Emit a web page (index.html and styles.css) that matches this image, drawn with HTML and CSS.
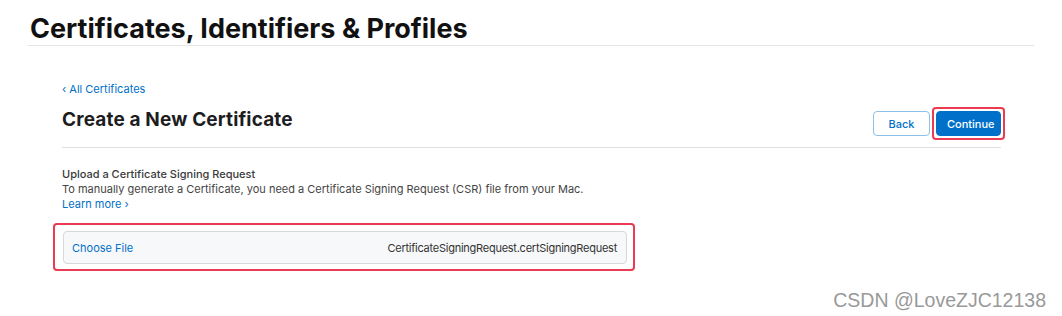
FILE: index.html
```html
<!DOCTYPE html>
<html lang="en">
<head>
  <meta charset="UTF-8" />
  <title>Create a New Certificate</title>
  <link rel="stylesheet" href="styles.css">
</head>
<body>
  <header class="page-header">
    <h1>Certificates, Identifiers &amp; Profiles</h1>
  </header>

  <main class="content">
    <a class="back-link" href="#">&lsaquo; All Certificates</a>

    <div class="title-row">
      <h2>Create a New Certificate</h2>
      <div class="actions">
        <button class="btn btn-secondary">Back</button>
        <span class="highlight highlight-btn">
          <button class="btn btn-primary">Continue</button>
        </span>
      </div>
    </div>

    <section class="upload">
      <h3>Upload a Certificate Signing Request</h3>
      <p>To manually generate a Certificate, you need a Certificate Signing Request (CSR) file from your Mac.</p>
      <a class="learn-more" href="#">Learn more &rsaquo;</a>

      <div class="highlight highlight-file">
        <div class="file-box">
          <span class="choose">Choose File</span>
          <span class="file-name">CertificateSigningRequest.certSigningRequest</span>
        </div>
      </div>
    </section>
  </main>

  <div class="watermark">CSDN @LoveZJC12138</div>
</body>
</html>
```

FILE: styles.css
```css
* {
  box-sizing: border-box;
}

body {
  margin: 0;
  background: #fff;
  font-family: Inter, "Noto Sans", "Liberation Sans", sans-serif;
  color: #333;
  position: relative;
  height: 316px;
  overflow: hidden;
}

a {
  text-decoration: none;
  color: #0070c9;
}

.page-header {
  margin-left: 28px;
  width: 1006px;
  border-bottom: 1px solid #e5e5e5;
  padding-top: 13px;
  height: 46px;
}

.page-header h1 {
  margin: 0 0 0 2px;
  font-size: 27px;
  font-weight: 700;
  line-height: 32px;
  color: #111;
}

.content {
  margin-left: 62px;
  width: 939px;
  padding-top: 36px;
}

.back-link {
  display: block;
  font-size: 11px;
  line-height: 14px;
}

/* title + buttons, divider under them */
.title-row {
  display: flex;
  justify-content: space-between;
  align-items: flex-start;
  border-bottom: 1px solid #e0e0e0;
  height: 52px;
}

.title-row h2 {
  margin: 12px 0 0;
  font-size: 19px;
  font-weight: 700;
  line-height: 24px;
  color: #1d1d1f;
  letter-spacing: 0.15px;
}

.actions {
  display: flex;
  align-items: center;
  gap: 2px;
  margin-top: 11px;
  margin-right: -4px;
}

.btn {
  font-family: inherit;
  font-size: 11px;
  font-weight: 500;
  height: 25px;
  border-radius: 4px;
  padding: 0 10px;
  cursor: pointer;
}

.btn-secondary {
  width: 57px;
  background: #fff;
  color: #0070c9;
  border: 1px solid #8ebfe6;
}

.btn-primary {
  width: 65px;
  background: #0070c9;
  color: #fff;
  border: 1px solid #0070c9;
}

.highlight {
  display: block;
  border: 2px solid #ea3b52;
  border-radius: 4px;
}

.highlight-btn {
  padding: 2px;
}

.highlight-btn .btn {
  display: block;
}

.upload {
  padding-top: 19px;
}

.upload h3 {
  margin: 0;
  font-size: 11px;
  font-weight: 500;
  line-height: 15px;
  color: #3a3a3a;
}

.upload p {
  margin: 0;
  font-size: 11px;
  line-height: 15px;
  color: #444;
}

.learn-more {
  display: block;
  font-size: 11px;
  line-height: 15px;
}

.highlight-file {
  margin: 11px 0 0 -9px;
  width: 582px;
  padding: 6px 6px 5px 8px;
}

.file-box {
  display: flex;
  justify-content: space-between;
  align-items: center;
  height: 33px;
  padding: 0 9px 0 8px;
  background: #f7f8f9;
  border: 1px solid #d8d8d8;
  border-radius: 4px;
  font-size: 11px;
}

.choose {
  color: #0070c9;
}

.file-name {
  color: #333;
  letter-spacing: -0.25px;
}

.watermark {
  position: absolute;
  right: 16px;
  bottom: 4px;
  font-family: "Liberation Sans", Arial, sans-serif;
  font-size: 19.5px;
  color: #999;
}
```
